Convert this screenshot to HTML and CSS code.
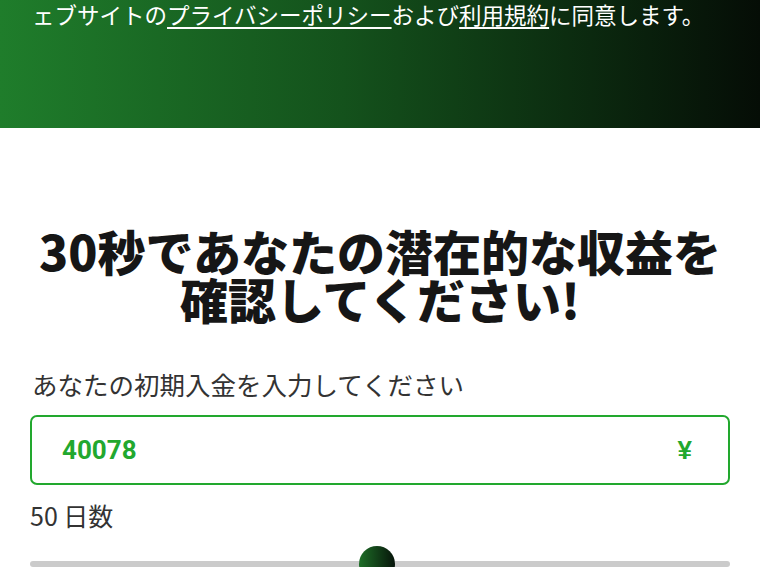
FILE: index.html
```html
<!DOCTYPE html>
<html lang="ja">

<head>
    <meta charset="UTF-8" />
    <meta name="viewport" content="width=device-width, initial-scale=1.0" />
    <title>収益計算</title>
    <link rel="stylesheet" href="styles.css">
</head>

<body>
    <div class="hero">
        <p class="consent">ェブサイトの<a href="#">プライバシーポリシー</a>および<a href="#">利用規約</a>に同意します。</p>
    </div>

    <div class="calc">
        <h1>30秒であなたの潜在的な収益を<br>確認してください!</h1>

        <label class="field-label" for="deposit">あなたの初期入金を入力してください</label>
        <div class="amount">
            <input type="text" id="deposit" value="40078" />
            <span class="currency">¥</span>
        </div>

        <div class="days-label"><span id="daysVal">50</span> 日数</div>
        <input type="range" id="days" class="days" min="1" max="100" value="50" />
    </div>

    <script>
        const days = document.getElementById('days');
        const daysVal = document.getElementById('daysVal');
        days.addEventListener('input', () => {
            daysVal.textContent = days.value;
        });
    </script>
</body>

</html>
```

FILE: styles.css
```css
body {
    margin: 0;
    font-family: 'Noto Sans CJK JP', 'Noto Sans', sans-serif;
    background: #fff;
    color: #222;
}

.hero {
    height: 128px;
    background: linear-gradient(90deg, #1f7d2b 0%, #14521c 45%, #050d06 100%);
    padding: 0 32px;
    box-sizing: border-box;
}

.consent {
    margin: 0;
    color: #fff;
    font-size: 22.5px;
    line-height: 28px;
    font-weight: 400;
}

.consent a {
    color: #fff;
    text-decoration: underline;
    text-underline-offset: 3px;
}

.calc {
    padding: 98px 30px 0;
}

.calc h1 {
    margin: 0 0 47px;
    text-align: center;
    font-size: 48px;
    line-height: 48px;
    font-weight: 900;
    color: #161616;
}

.field-label {
    display: block;
    font-size: 25.5px;
    line-height: 30px;
    color: #333;
    margin-bottom: 16px;
    padding-left: 2px;
}

.amount {
    display: flex;
    align-items: center;
    height: 70px;
    border: 2px solid #22a82e;
    border-radius: 7px;
    box-sizing: border-box;
    padding: 0 36px 0 30px;
}

.amount input {
    flex: 1;
    border: none;
    outline: none;
    font-family: 'Liberation Sans Narrow', 'Roboto', sans-serif;
    font-weight: bold;
    font-size: 26px;
    color: #22a82e;
    background: transparent;
    padding: 0;
}

.currency {
    font-family: 'Liberation Sans', sans-serif;
    font-weight: bold;
    font-size: 26px;
    color: #22a82e;
}

.days-label {
    font-size: 25px;
    line-height: 30px;
    color: #333;
    margin-top: 15px;
}

.days {
    -webkit-appearance: none;
    appearance: none;
    display: block;
    width: 100%;
    height: 6px;
    margin: 31px 0 0;
    background: #cbcbcb;
    border-radius: 3px;
    outline: none;
}

.days::-webkit-slider-thumb {
    -webkit-appearance: none;
    width: 36px;
    height: 36px;
    border-radius: 50%;
    background: linear-gradient(90deg, #1e6e27, #06140a);
    cursor: pointer;
}
```
